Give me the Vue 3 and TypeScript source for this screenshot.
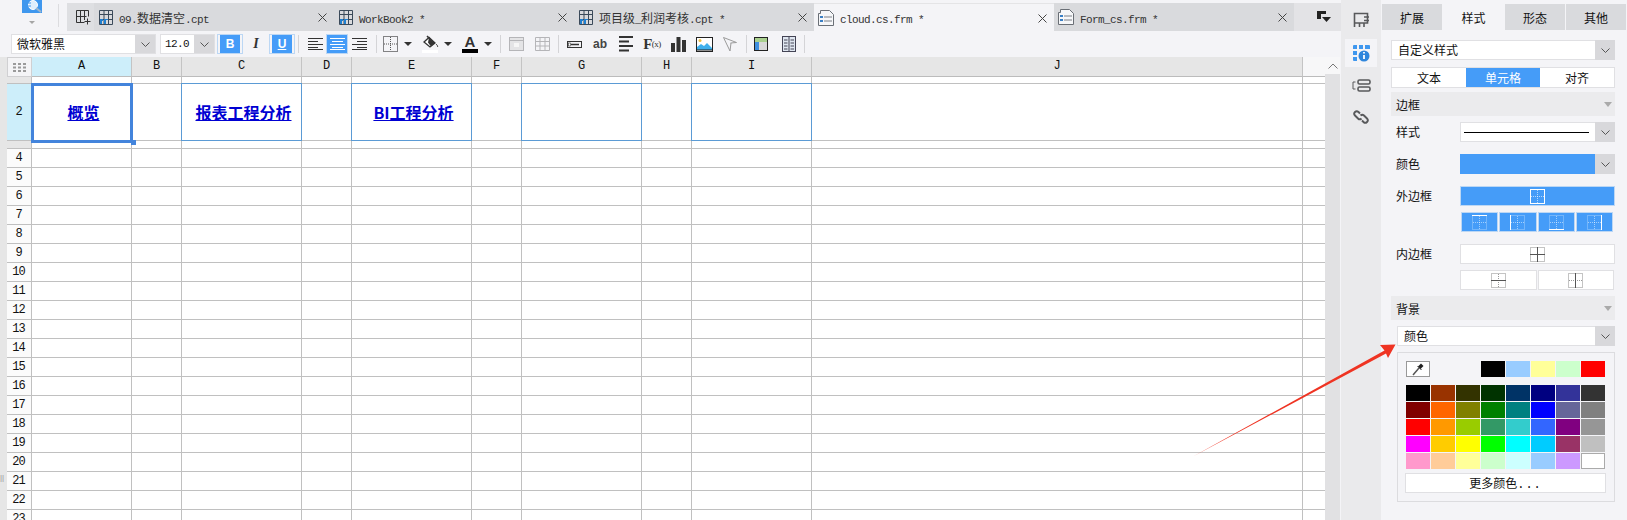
<script setup lang="ts">
interface Tab { label: string; kind: 'cpt' | 'frm'; active?: boolean }
interface Row { label: string; cls: string }

const tabs: Tab[] = [
  { label: '09.数据清空.cpt', kind: 'cpt' },
  { label: 'WorkBook2 *', kind: 'cpt' },
  { label: '项目级_利润考核.cpt *', kind: 'cpt' },
  { label: 'cloud.cs.frm *', kind: 'frm', active: true },
  { label: 'Form_cs.frm *', kind: 'frm' },
]

function runs(s: string): { t: string; lat: boolean }[] {
  const parts = s.match(/[\u4e00-\u9fff]+|[^\u4e00-\u9fff]+/g) ?? []
  return parts.map((t) => ({ t, lat: !/[\u4e00-\u9fff]/.test(t) }))
}

const cols = ['A', 'B', 'C', 'D', 'E', 'F', 'G', 'H', 'I', 'J', 'K']
const links: Record<string, string> = { A: '概览', C: '报表工程分析', E: 'BI工程分析' }
const framed = ['C', 'E', 'G', 'I']

const rows: Row[] = [
  { label: '', cls: 'r1' },
  { label: '2', cls: 'r2' },
  { label: '', cls: 'r3' },
]
for (let n = 4; n <= 23; n++) rows.push({ label: String(n), cls: 'rn' })

const recent = ['#000000', '#99ccff', '#ffff99', '#ccffcc', '#ff0000']
const palette = [
  '#000000', '#993300', '#333300', '#003300', '#003366', '#000080', '#333399', '#333333',
  '#800000', '#ff6600', '#808000', '#008000', '#008080', '#0000ff', '#666699', '#808080',
  '#ff0000', '#ff9900', '#99cc00', '#339966', '#33cccc', '#3366ff', '#800080', '#969696',
  '#ff00ff', '#ffcc00', '#ffff00', '#00ff00', '#00ffff', '#00ccff', '#993366', '#c0c0c0',
  '#ff99cc', '#ffcc99', '#ffff99', '#ccffcc', '#ccffff', '#99ccff', '#cc99ff', '#ffffff',
]
const sides = ['top', 'left', 'bottom', 'right']
</script>

<template>
  <div class="app">
    <div class="main">
      <div class="tabbar">
        <div class="logo-col">
          <div class="logo">
            <svg width="20" height="13" viewBox="0 0 20 13">
              <rect width="20" height="13" fill="#3f97ee" />
              <circle cx="11" cy="5" r="4.5" fill="#dfeefc" stroke="#fff" />
              <path d="M4 3h5M4 6h5" stroke="#3f97ee" stroke-width="1" />
              <path d="M14 8l5 4" stroke="#9bb6cf" stroke-width="2" />
            </svg>
            <span class="logo-caret"></span>
          </div>
        </div>
        <div class="strip">
          <div class="strip-first">
            <svg width="16" height="16" viewBox="0 0 16 16" fill="none" stroke="#333">
              <path d="M1.500 13.500V1.500h12v6M1.500 7.500h10M5.500 2v11M9.500 2v9M1.500 13.500h8" />
              <path d="M12.500 9.500v6M9.500 12.500h6" />
            </svg>
          </div>
          <div v-for="tab in tabs" :key="tab.label" class="tab" :class="{ active: tab.active }">
            <svg v-if="tab.kind === 'cpt'" class="tab-ic" width="14" height="15" viewBox="0 0 14 15" fill="none">
              <path d="M.5.500h13v14H.5zM.5 4.500h13M5 .500v14M9.500 .500v14M.5 9.500h13" stroke="#3b4a5a" />
              <path d="M1 9h3v2H3v3H1zM5 9h4v1H7v4H5z" fill="#1f7fd0" />
            </svg>
            <svg v-else class="tab-ic frm" width="16" height="16" viewBox="0 0 16 16" fill="none">
              <path d="M.5 3.500h2v-3h9l4 4v11H.5z" stroke="#6a6f76" fill="#f6f7f9" />
              <rect x="2" y="6" width="3" height="2" fill="#3b7fc4" />
              <rect x="2" y="10" width="3" height="2" fill="#3b7fc4" />
              <path d="M6 7h8M6 11h8" stroke="#7a7f86" />
            </svg>
            <span class="tab-text"><span v-for="(r, i) in runs(tab.label)" :key="i" :class="{ lat: r.lat }">{{ r.t }}</span></span>
            <svg class="tab-x" width="9" height="9" viewBox="0 0 9 9"><path d="M.5.500l8 8M8.500.500l-8 8" stroke="#444" fill="none" /></svg>
          </div>
          <div class="strip-end">
            <svg width="14" height="12" viewBox="0 0 14 12">
              <path d="M0 0h9v3H4v5H0z" fill="#222" />
              <path d="M5 6h9l-4.500 5z" fill="#222" />
            </svg>
          </div>
        </div>
      </div>

      <div class="toolbar">
        <div class="sel font-sel"><span class="sel-text">微软雅黑</span><span class="sel-arrow"><svg width="9" height="5" viewBox="0 0 9 5"><path d="M.5.500l4 4 4-4" fill="none" stroke="#555" /></svg></span></div>
        <div class="sel size-sel"><span class="sel-text mono">12.0</span><span class="sel-arrow"><svg width="9" height="5" viewBox="0 0 9 5"><path d="M.5.500l4 4 4-4" fill="none" stroke="#555" /></svg></span></div>
        <button class="tb on bold-btn">B</button>
        <button class="tb italic-btn">I</button>
        <button class="tb on under-btn">U</button>
        <i class="sep sep-a"></i>
        <button class="tb narrow"><svg width="15" height="12" viewBox="0 0 15 12"><path d="M0 .500h15M0 3.500h10M0 6.500h15M0 9.500h10M0 11.500h15" stroke="#333" /></svg></button>
        <button class="tb narrow on"><svg width="15" height="12" viewBox="0 0 15 12"><path d="M0 .500h15M2 3.500h11M0 6.500h15M2 9.500h11M0 11.500h15" stroke="#fff" /></svg></button>
        <button class="tb narrow"><svg width="15" height="12" viewBox="0 0 15 12"><path d="M0 .500h15M5 3.500h10M0 6.500h15M5 9.500h10M0 11.500h15" stroke="#333" /></svg></button>
        <i class="sep sep-b"></i>
        <button class="tb"><svg width="15" height="16" viewBox="0 0 15 16" fill="none"><rect x=".5" y=".5" width="14" height="15" stroke="#111" stroke-dasharray="1 1" /><path d="M7.500 1v14M1 8h13" stroke="#555" stroke-dasharray="1 1" /></svg></button>
        <span class="caret"></span>
        <button class="tb ml4"><svg width="17" height="18" viewBox="0 0 17 18" fill="none"><path d="M2 7l5-4.500 6 5.500-5 4z" fill="#fff" stroke="#333" stroke-width="1.300" /><path d="M7 2.500l6 5.500-4 3.500-3-4z" fill="#333" /><path d="M5 1l3 3" stroke="#333" stroke-width="1.500" /><path d="M14 9c1 1 2 2 1.500 3" stroke="#333" /><rect y="15" width="16" height="3" fill="#fff" /></svg></button>
        <span class="caret"></span>
        <button class="tb ml4 color-a"><span class="a-glyph">A</span><span class="a-bar"></span></button>
        <span class="caret"></span>
        <i class="sep sep-c"></i>
        <button class="tb ml2"><svg width="15" height="14" viewBox="0 0 15 14" fill="none"><rect x=".5" y=".5" width="14" height="13" fill="#e4e4e6" stroke="#b5b5b8" /><path d="M0 3.500h15" stroke="#b5b5b8" /><rect x="5" y="6" width="5" height="4" fill="#f6f6f6" /></svg></button>
        <button class="tb"><svg width="15" height="14" viewBox="0 0 15 14" fill="none" stroke="#b5b5b8"><path d="M.5.500h14v13H.5zM.5 4.500h14M.5 9h14M5 .500v13M10 .500v13" /></svg></button>
        <i class="sep sep-d"></i>
        <button class="tb ml2"><svg width="15" height="7" viewBox="0 0 15 7" fill="none"><rect x=".5" y=".5" width="14" height="6" stroke="#333" /><path d="M4 3.500h8" stroke="#333" stroke-width="1.500" /><rect x="1.500" y="2" width="2" height="3" fill="#fff" stroke="#333" stroke-width=".6" /></svg></button>
        <button class="tb ab">ab</button>
        <button class="tb"><svg width="15" height="16" viewBox="0 0 15 16"><path d="M0 1h14M0 5.500h10M0 10h14M0 14.500h10" stroke="#333" stroke-width="2" /></svg></button>
        <button class="tb fx">F<small>(x)</small></button>
        <button class="tb"><svg width="15" height="15" viewBox="0 0 15 15"><path d="M0 6h4v9H0zM5.500 0h4v15h-4zM11 3h4v12h-4z" fill="#333" /></svg></button>
        <button class="tb"><svg width="17" height="15" viewBox="0 0 17 15"><rect x=".5" y=".5" width="16" height="14" fill="#fff" stroke="#222" /><path d="M1 13V10l4-3 3 2 3-3 5 5v2z" fill="#3fb0ec" /><circle cx="4" cy="3.500" r="1.500" fill="#f0c040" /><path d="M1 13h15" stroke="#222" /></svg></button>
        <button class="tb"><svg width="14" height="15" viewBox="0 0 14 15" fill="none"><path d="M.5 .500l13 5-6 .5M.5 .500L7 14l1-8" stroke="#9a9a9a" /></svg></button>
        <i class="sep sep-d"></i>
        <button class="tb ml1"><svg width="14" height="14" viewBox="0 0 14 14"><rect x=".5" y=".5" width="13" height="13" fill="#d8d8d8" stroke="#222" /><rect x="1" y="1" width="12" height="4" fill="#a9d08e" /><rect x="1" y="5" width="4" height="8" fill="#3f8fdf" /></svg></button>
        <button class="tb ml2"><svg width="14" height="16" viewBox="0 0 14 16" fill="none"><rect x=".5" y=".5" width="13" height="15" fill="#dfe6f0" stroke="#445" /><path d="M7 1v14M2 4h3.500M2 7h3.500M2 10h3.500M2 13h3.500M8.500 4H12M8.500 7H12M8.500 10H12M8.500 13H12" stroke="#445" /></svg></button>
        <i class="sep sep-e"></i>
      </div>

      <div class="sheet-wrap">
        <div class="gutter"><span class="grip">||</span></div>
        <div class="sheet">
          <div class="head-row">
            <div class="corner">
              <svg width="13" height="9" viewBox="0 0 13 9" fill="#9a9a9a"><path d="M0 0h3v2H0zM5 0h3v2H5zM10 0h3v2h-3zM0 3.500h3v2H0zM5 3.500h3v2H5zM10 3.500h3v2h-3zM0 7h3v2H0zM5 7h3v2H5zM10 7h3v2h-3z" /></svg>
            </div>
            <div v-for="c in cols" :key="c" class="col-head" :class="['w' + c, { picked: c === 'A' }]">{{ c === 'K' ? '' : c }}</div>
          </div>
          <div v-for="row in rows" :key="row.cls + row.label" class="row" :class="row.cls">
            <div class="row-head">{{ row.label }}</div>
            <div v-for="c in cols" :key="c" class="cell" :class="['w' + c, row.cls === 'r2' && framed.includes(c) ? 'framed' : '', row.cls === 'r2' && c === 'A' ? 'current' : '']">
              <a v-if="row.cls === 'r2' && links[c]" class="link">{{ links[c] }}</a>
            </div>
          </div>
        </div>
        <div class="vscroll">
          <div class="vs-up"><svg width="10" height="6" viewBox="0 0 10 6"><path d="M.5 5.500L5 1l4.500 4.500" fill="none" stroke="#777" /></svg></div>
        </div>
      </div>
    </div>

    <div class="side">
      <div class="side-btn first">
        <svg width="17" height="16" viewBox="0 0 17 16" fill="none" stroke="#58595b" stroke-width="1.600"><path d="M1.500 15V1.500h13V11H1.500M6.500 11v4M11 11v4M16 5H11M16 8.500H11" /></svg>
      </div>
      <div class="side-btn on">
        <svg width="17" height="17" viewBox="0 0 17 17"><path d="M0 1a1 1 0 011-1h3v4H0zM6 0h4v4H6zM12 0h4a1 1 0 011 1v3h-5zM0 6h4v4H0zM0 12h4v4H1a1 1 0 01-1-1z" fill="#3f97ee" /><circle cx="11" cy="11" r="5.500" fill="#2f86dc" /><path d="M11 7v1.500M11 10v4" stroke="#fff" stroke-width="1.800" /></svg>
      </div>
      <div class="side-btn">
        <svg width="19" height="13" viewBox="0 0 19 13" fill="none" stroke="#58595b"><rect x="6" y="1" width="12" height="4" rx="1.500" stroke-width="1.600" /><rect x="6" y="8" width="12" height="4" rx="1.500" stroke-width="1.600" /><path d="M3.500 3H1v7h2.500" /></svg>
      </div>
      <div class="side-btn">
        <svg width="16" height="16" viewBox="0 0 16 16" fill="none" stroke="#58595b" stroke-width="1.900"><path d="M7 4.500L5.500 3a2.500 2.500 0 00-3.500 0 2.500 2.500 0 000 3.500L5 9.500a2.500 2.500 0 003.500 0" /><path d="M9 11.500l1.500 1.500a2.500 2.500 0 003.500 0 2.500 2.500 0 000-3.500L11 6.500a2.500 2.500 0 00-3.500 0" /></svg>
      </div>
    </div>

    <div class="panel">
      <div class="p-tabs">
        <div class="p-tab">扩展</div>
        <div class="p-tab active">样式</div>
        <div class="p-tab">形态</div>
        <div class="p-tab">其他</div>
      </div>
      <div class="p-body">
        <div class="dd top-dd">
          <span class="dd-val">自定义样式</span>
          <span class="dd-arrow"><svg width="9" height="5" viewBox="0 0 9 5"><path d="M.5.500l4 4 4-4" fill="none" stroke="#555" /></svg></span>
        </div>
        <div class="seg">
          <div class="seg-i">文本</div>
          <div class="seg-i on">单元格</div>
          <div class="seg-i">对齐</div>
        </div>
        <div class="sec">边框<span class="sec-caret"></span></div>

        <div class="frow style-row">
          <span class="lbl">样式</span>
          <div class="dd ctl"><span class="dd-val line-val"><i class="solid-line"></i></span><span class="dd-arrow"><svg width="9" height="5" viewBox="0 0 9 5"><path d="M.5.500l4 4 4-4" fill="none" stroke="#555" /></svg></span></div>
        </div>
        <div class="frow color-row">
          <span class="lbl">颜色</span>
          <div class="dd ctl"><span class="dd-val blue-val"></span><span class="dd-arrow"><svg width="9" height="5" viewBox="0 0 9 5"><path d="M.5.500l4 4 4-4" fill="none" stroke="#555" /></svg></span></div>
        </div>
        <div class="frow outer-row">
          <span class="lbl">外边框</span>
          <div class="bd-btn on wide">
            <svg width="15" height="15" viewBox="0 0 15 15" fill="none" stroke="#fff"><rect x=".5" y=".5" width="14" height="14" /><path d="M7.500 1v13M1 7.500h13" stroke-dasharray="1 1" stroke-opacity=".6" /></svg>
          </div>
        </div>
        <div class="four">
          <div v-for="s in sides" :key="s" class="bd-btn on">
            <svg width="15" height="15" viewBox="0 0 15 15" fill="none" stroke="#fff">
              <g stroke-opacity=".5" stroke-dasharray="1 1">
                <rect x=".5" y=".5" width="14" height="14" />
                <path d="M7.500 1v13M1 7.500h13" />
              </g>
              <path v-if="s === 'top'" d="M0 .500h15" />
              <path v-if="s === 'left'" d="M.5 0v15" />
              <path v-if="s === 'bottom'" d="M0 14.500h15" />
              <path v-if="s === 'right'" d="M14.500 0v15" />
            </svg>
          </div>
        </div>
        <div class="frow inner-row">
          <span class="lbl">内边框</span>
          <div class="bd-btn white wide">
            <svg width="15" height="15" viewBox="0 0 15 15" fill="none"><rect x=".5" y=".5" width="14" height="14" stroke="#888" stroke-dasharray="1 1" /><path d="M7.500 0v15M0 7.500h15" stroke="#555" /></svg>
          </div>
        </div>
        <div class="two">
          <div class="bd-btn white">
            <svg width="15" height="15" viewBox="0 0 15 15" fill="none"><rect x=".5" y=".5" width="14" height="14" stroke="#888" stroke-dasharray="1 1" /><path d="M7.500 1v13" stroke="#999" stroke-dasharray="1 1" /><path d="M0 7.500h15" stroke="#555" /></svg>
          </div>
          <div class="bd-btn white">
            <svg width="15" height="15" viewBox="0 0 15 15" fill="none"><rect x=".5" y=".5" width="14" height="14" stroke="#888" stroke-dasharray="1 1" /><path d="M1 7.500h13" stroke="#999" stroke-dasharray="1 1" /><path d="M7.500 0v15" stroke="#555" /></svg>
          </div>
        </div>
        <div class="sec bg-sec">背景<span class="sec-caret"></span></div>
        <div class="dd bg-dd">
          <span class="dd-val">颜色</span>
          <span class="dd-arrow"><svg width="9" height="5" viewBox="0 0 9 5"><path d="M.5.500l4 4 4-4" fill="none" stroke="#555" /></svg></span>
        </div>
        <div class="colors">
          <div class="recent">
            <div class="dropper">
              <svg width="12" height="13" viewBox="0 0 12 13" fill="none"><path d="M1 12l6-7" stroke="#555" stroke-width="1.500" /><path d="M6 3.500l3-3 2.500 2.500-3 3z" fill="#222" /><path d="M5.500 3l4 4" stroke="#222" /></svg>
            </div>
            <span v-for="(c, i) in recent" :key="i" class="swatch" :style="{ background: c }"></span>
          </div>
          <div class="palette">
            <span v-for="(c, i) in palette" :key="i" class="swatch" :class="{ whitebox: c === '#ffffff' }" :style="{ background: c }"></span>
          </div>
          <div class="more">更多颜色<span class="dots">...</span></div>
        </div>
      </div>
    </div>

    <svg class="arrow" width="1627" height="520" viewBox="0 0 1627 520">
      <path d="M1193 456.500L1384.500 350.500 1380 345 1395.500 344.500 1388 358 1386 353.500z" fill="#ef3423" />
    </svg>
  </div>
</template>

<style>
html, body { margin: 0; padding: 0; background: #f4f4f7; }
</style>

<style scoped>
.app {
  position: relative;
  display: flex;
  width: 1627px;
  height: 520px;
  overflow: hidden;
  background: #f4f4f7;
  color: #111;
  font-family: "Noto Sans CJK SC", "Liberation Sans", sans-serif;
  font-size: 12px;
}
button { padding: 0; border: 0; background: none; font: inherit; color: inherit; }

.main { display: flex; flex-direction: column; width: 1341px; flex: none; }

.tabbar { display: flex; height: 31px; flex: none; }
.logo-col { position: relative; width: 67px; flex: none; }
.logo-col::after { content: ""; position: absolute; left: 58px; top: 4px; height: 23px; width: 1px; background: #dcdcdf; }
.logo { display: flex; flex-direction: column; align-items: center; width: 20px; margin-left: 22px; }
.logo svg { display: block; }
.logo-caret { margin-top: 8px; border: 3px solid transparent; border-top: 3px solid #a5a5a5; border-bottom: 0; }

.strip { display: flex; flex: 1; margin-top: 3px; background: #d9dadd; }
.strip-first { display: flex; align-items: center; justify-content: center; width: 27px; padding-left: 4px; box-sizing: border-box; flex: none; background: #dedfe2; }
.tab { position: relative; display: flex; align-items: center; width: 240px; flex: none; box-sizing: border-box; padding-left: 5px; color: #333; }
.tab.active { background: #f4f4f7; border-top: 1px solid #e4e4e6; }
.tab-ic.frm { margin-left: -1px; }
.tab-text { margin-left: 6px; white-space: pre; font-size: 12px; letter-spacing: 0; }
.lat { font-family: "Liberation Mono", monospace; font-size: 11px; letter-spacing: -0.6px; }
.tab-x { position: absolute; left: 224px; top: 10px; }
.strip-end { flex: 1; display: flex; align-items: center; justify-content: flex-end; padding-right: 10px; background: #e3e3e6; }

.toolbar { display: flex; align-items: center; height: 26px; flex: none; padding-left: 11px; box-sizing: border-box; }
.sel { display: flex; height: 20px; box-sizing: border-box; border: 1px solid #e0e0e3; background: #fff; flex: none; }
.font-sel { width: 145px; }
.size-sel { width: 55px; margin-left: 4px; margin-right: 2px; }
.sel-text { flex: 1; padding-left: 5px; line-height: 18px; font-size: 12px; }
.sel-text.mono { font-family: "Liberation Mono", monospace; font-size: 11px; letter-spacing: -0.6px; padding-left: 4px; }
.sel-arrow { display: flex; align-items: center; justify-content: center; width: 20px; background: #d8d8db; }

.tb { display: flex; align-items: center; justify-content: center; width: 26px; height: 20px; flex: none; position: relative; color: #333; }
.tb.narrow { width: 22px; }
.tb.on { background: #459cf8; border: 1px solid #bcd7f4; box-sizing: border-box; color: #fff; }
.bold-btn, .under-btn { background-clip: content-box !important; padding: 0 2px !important; }
.bold-btn { font-family: "Liberation Sans", sans-serif; font-weight: 700; font-size: 12px; }
.italic-btn { font-family: "Liberation Serif", serif; font-style: italic; font-weight: 700; font-size: 14px; }
.under-btn { font-family: "Liberation Sans", sans-serif; font-weight: 700; font-size: 12px; text-decoration: underline; }
.sep { display: block; width: 1px; height: 18px; background: #d4d4d7; flex: none; }
.sep-a { margin: 0 5px 0 3px; }
.sep-b { margin: 0 0 0 6px; }
.sep-c { margin-left: 7px; }
.sep-d { margin-left: 3px; }
.sep-e { margin-left: 2px; }
.caret { width: 10px; flex: none; height: 4px; position: relative; }
.caret::after { content: ""; position: absolute; left: 1px; top: 0; border: 4px solid transparent; border-top: 4px solid #333; border-bottom: 0; }
.ml1 { margin-left: 1px; }
.ml2 { margin-left: 2px; }
.ml4 { margin-left: 4px; }
.color-a { flex-direction: column; }
.a-glyph { font-family: "Liberation Sans", sans-serif; font-weight: 700; font-size: 15px; line-height: 14px; color: #333; }
.a-bar { width: 16px; height: 4px; background: #000; }
.ab { font-family: "Liberation Sans", sans-serif; font-weight: 700; font-size: 12px; color: #444; }
.fx { font-family: "Liberation Serif", serif; font-weight: 700; font-size: 15px; color: #333; letter-spacing: -0.5px; }
.fx small { font-size: 9px; font-weight: 400; }

.sheet-wrap { display: flex; flex: 1; min-height: 0; }
.gutter { position: relative; width: 7px; flex: none; background: #e6e6e6; }
.grip { position: absolute; left: 0; top: 416px; font-family: "Liberation Sans", sans-serif; font-size: 8px; line-height: 10px; color: #999; }
.sheet { width: 1318px; flex: none; overflow: hidden; background: #fff; }
.vscroll { width: 15px; flex: none; background: #e1e1e3; margin-right: 1px; }
.vs-up { display: flex; align-items: center; justify-content: center; height: 17px; background: #f7f7f8; }

.head-row { display: flex; height: 20px; }
.corner { display: flex; align-items: center; justify-content: center; width: 25px; height: 20px; box-sizing: border-box; background: #f4f4f6; border: 1px solid #d0d0d2; flex: none; }
.col-head { height: 20px; box-sizing: border-box; text-align: center; line-height: 19px; background: #e6e6e6; border-right: 1px solid #c4c4c4; border-bottom: 1px solid #bcbcbc; font-family: "Liberation Mono", monospace; font-size: 12px; flex: none; }
.col-head.picked { background: #cdeefa; }
.col-head.wK { background: #f7f7f8; border-right: 0; }

.row { display: flex; }
.r1 { height: 7px; }
.r2 { height: 57px; }
.r3 { height: 8px; }
.rn { height: 19px; }
.row-head { width: 25px; flex: none; box-sizing: border-box; text-align: center; padding-right: 1px; background: #fbfbfb; border-right: 1px solid #c0c0c0; border-bottom: 1px solid #c0c0c0; font-family: "Liberation Mono", monospace; font-size: 12px; letter-spacing: -1px; line-height: 18px; }
.r1 .row-head, .r3 .row-head { background: #e6e6e6; }
.r2 .row-head { background: #cdeefa; line-height: 56px; }
.cell { position: relative; display: flex; align-items: center; justify-content: center; box-sizing: border-box; height: 100%; flex: none; border-right: 1px solid #c0c0c0; border-bottom: 1px solid #c0c0c0; }
.cell.wK { border-right: 0; }
.wA { width: 100px; }
.wB, .wD, .wF, .wH { width: 50px; }
.wC, .wE, .wG, .wI { width: 120px; }
.wJ { width: 491px; }
.wK { width: 22px; }
.framed::after { content: ""; position: absolute; inset: -1px -1px -1px -1px; border: 1px solid #5b9bd5; pointer-events: none; }
.current { z-index: 2; }
.current::after { content: ""; position: absolute; inset: -1px -2px -3px -1px; border: 3px solid #4384dc; pointer-events: none; }
.current::before { content: ""; position: absolute; right: -5px; bottom: -5px; width: 5px; height: 5px; background: #4384dc; }
.link { padding-left: 4px; font-size: 16px; font-weight: 700; color: #0000d2; text-decoration: underline; line-height: 20px; }

.side { width: 40px; flex: none; box-sizing: border-box; background: #eaeaec; display: flex; flex-direction: column; align-items: center; padding-top: 6px; }
.side-btn { display: flex; align-items: center; justify-content: center; width: 32px; height: 28px; margin-bottom: 4px; }
.side-btn.on { background: #f4f4f7; }
.side-btn.first { margin-bottom: 5px; }

.panel { flex: 1; display: flex; flex-direction: column; }
.p-tabs { display: flex; margin-top: 4px; padding-left: 1px; gap: 1px; height: 26px; flex: none; }
.p-tab { width: 60px; display: flex; align-items: center; justify-content: center; background: #d9dadd; font-size: 12px; }
.p-tab.active { background: #f4f4f7; width: 61px; }
.p-body { padding: 10px 12px 0 10px; display: flex; flex-direction: column; }
.dd { display: flex; height: 20px; box-sizing: border-box; flex: none; background: #fff; border: 1px solid #e0e0e3; }
.dd-val { flex: 1; padding-left: 6px; line-height: 18px; }
.dd-arrow { display: flex; align-items: center; justify-content: center; width: 20px; background: #d8d8db; margin: -1px -1px -1px 0; }
.seg { display: flex; margin-top: 7px; height: 21px; box-sizing: border-box; background: #fff; border: 1px solid #e0e0e3; }
.seg-i { flex: 1; text-align: center; line-height: 19px; }
.seg-i.on { background: #459cf8; color: #fff; }
.sec { position: relative; margin-top: 4px; height: 24px; line-height: 26px; padding-left: 5px; background: #ebebed; }
.sec-caret { position: absolute; right: 3px; top: 10px; border: 4px solid transparent; border-top: 5px solid #aaa; border-bottom: 0; }
.frow { display: flex; align-items: center; }
.lbl { width: 69px; padding-left: 5px; padding-bottom: 2px; box-sizing: border-box; flex: none; }
.ctl { flex: 1; }
.style-row { margin-top: 6px; }
.color-row { margin-top: 12px; }
.outer-row { margin-top: 12px; }
.line-val { display: flex; align-items: center; padding-left: 3px; padding-right: 6px; }
.solid-line { display: block; width: 100%; height: 1px; background: #000; }
.blue-val { background: #459cf8; margin: -1px 0 -1px -1px; }
.bd-btn { display: flex; align-items: center; justify-content: center; height: 20px; box-sizing: border-box; flex: 1; }
.bd-btn.on { background: #459cf8; border: 1px solid #bcd7f4; }
.bd-btn.white { background: #fff; border: 1px solid #e0e0e3; }
.bd-btn svg { display: block; }
.four { display: flex; gap: 1px; margin: 6px 2px 0 70px; }
.inner-row { margin-top: 12px; }
.two { display: flex; gap: 1px; margin: 6px 1px 0 69px; }
.bg-sec { margin-top: 6px; }
.bg-dd { margin: 6px 0 0 6px; }
.colors { margin: 6px 0 0 6px; height: 150px; box-sizing: border-box; border: 1px solid #dcdcdf; padding: 8px 8px 0 8px; }
.recent { display: flex; gap: 1px; height: 16px; }
.dropper { display: flex; align-items: center; justify-content: center; width: 24px; height: 16px; box-sizing: border-box; border: 1px solid #999; background: #fff; margin-right: 50px; }
.swatch { display: block; width: 24px; height: 16px; box-sizing: border-box; }
.swatch.whitebox { border: 1px solid #aaa; }
.palette { display: grid; grid-template-columns: repeat(8, 24px); column-gap: 1px; row-gap: 1px; margin-top: 8px; }
.more { margin-top: 4px; width: 201px; margin-left: -1px; height: 20px; box-sizing: border-box; background: #fff; border: 1px solid #e0e0e3; text-align: center; line-height: 18px; }
.dots { font-family: "Liberation Mono", monospace; letter-spacing: 1px; }

.arrow { position: absolute; left: 0; top: 0; pointer-events: none; }
</style>
